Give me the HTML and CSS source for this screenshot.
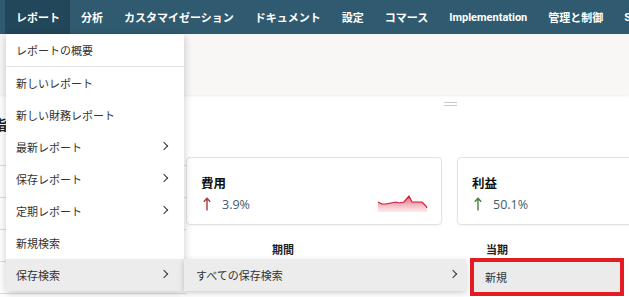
FILE: index.html
```html
<!DOCTYPE html>
<html lang="ja">
<head>
    <meta charset="UTF-8">
    <title>レポート</title>
    <link rel="stylesheet" href="styles.css">
</head>
<body>
<div class="nav">
    <a class="active">レポート</a>
    <a>分析</a>
    <a>カスタマイゼーション</a>
    <a>ドキュメント</a>
    <a>設定</a>
    <a>コマース</a>
    <a>Implementation</a>
    <a>管理と制御</a>
    <a>Setup</a>
</div>

<div class="page">
    <div class="band"></div>
    <div class="handle-row"><span class="handle"></span></div>
    <div class="dash">
        <div class="left">
            <div class="left-title">指標</div>
            <div class="left-row"></div>
            <div class="left-row"></div>
            <div class="left-row"></div>
            <div class="left-row"></div>
            <div class="left-row"></div>
        </div>
        <div class="right">
            <div class="cards">
                <div class="card">
                    <div class="info">
                        <div class="card-title">費用</div>
                        <div class="card-value">
                            <svg class="arrow" width="8" height="14" viewBox="0 0 8 14"><path d="M4 13.5V1.5M0.8 4.8L4 1.2L7.2 4.8" fill="none" stroke="#a8393c" stroke-width="1.4"/></svg>3.9%
                        </div>
                    </div>
                    <svg class="spark" width="50" height="18" viewBox="0 0 50 18">
                        <defs>
                            <linearGradient id="sg" x1="0" y1="0" x2="0" y2="1">
                                <stop offset="0" stop-color="#e0364f" stop-opacity="0.85"/>
                                <stop offset="1" stop-color="#f7c9d0" stop-opacity="0.4"/>
                            </linearGradient>
                        </defs>
                        <path d="M0 8 L4 10 L8 10 L13 9 L18 8 L21 9 L26 8 L31 2 L34 8 L39 8 L44 8 L48 12 L49 14 L49 18 L0 18 Z" fill="url(#sg)"/>
                        <path d="M0 8 L4 10 L8 10 L13 9 L18 8 L21 9 L26 8 L31 2 L34 8 L39 8 L44 8 L48 12 L49 14" fill="none" stroke="#d01a35" stroke-width="1.2"/>
                    </svg>
                </div>
                <div class="card">
                    <div class="info">
                        <div class="card-title">利益</div>
                        <div class="card-value">
                            <svg class="arrow" width="8" height="14" viewBox="0 0 8 14"><path d="M4 13.5V1.5M0.8 4.8L4 1.2L7.2 4.8" fill="none" stroke="#4b7d3e" stroke-width="1.4"/></svg>50.1%
                        </div>
                    </div>
                </div>
            </div>
            <div class="thead">
                <div>期間</div>
                <div>当期</div>
            </div>
        </div>
    </div>
</div>

<div class="menu">
    <div class="menu-item first">レポートの概要</div>
    <div class="menu-item">新しいレポート</div>
    <div class="menu-item">新しい財務レポート</div>
    <div class="menu-item sub">最新レポート</div>
    <div class="menu-item sub">保存レポート</div>
    <div class="menu-item sub">定期レポート</div>
    <div class="menu-item">新規検索</div>
    <div class="menu-item sub hover">保存検索
        <div class="submenu">
            <div class="menu-item sub hover">すべての保存検索
                <div class="submenu third">
                    <div class="menu-item">新規</div>
                </div>
            </div>
        </div>
    </div>
</div>
</body>
</html>
```

FILE: styles.css
```css
body {
    margin: 0;
    font-family: "Open Sans", "Noto Sans CJK JP", sans-serif;
    color: #222;
    background: #fff;
    overflow: hidden;
    position: relative;
    height: 297px;
}

.nav {
    display: flex;
    height: 34px;
    padding-left: 5px;
    background-color: #2f5a6f;
    white-space: nowrap;
}

.nav > a {
    display: flex;
    align-items: center;
    padding: 0 10px 0 11px;
    font-family: Roboto, "Noto Sans CJK JP", sans-serif;
    font-size: 11px;
    font-weight: bold;
    color: #fff;
}

.nav > a.active {
    background-color: #22465a;
}

.band {
    height: 61px;
    background-color: #f8f7f6;
    box-shadow: 0 1px 2px rgba(0, 0, 0, 0.08);
}

.handle-row {
    height: 13px;
    padding: 7px 0 0 444px;
}

.handle {
    display: block;
    width: 13px;
    height: 2px;
    border-top: 1px solid #c8c8c8;
    border-bottom: 1px solid #c8c8c8;
    box-sizing: content-box;
}

.dash {
    display: flex;
}

.left {
    flex: none;
    width: 186px;
}

.left-title {
    height: 19px;
    margin-left: -7px;
    font-size: 14px;
    font-weight: bold;
    line-height: 19px;
    font-family: "Noto Sans CJK JP", sans-serif;
}

.left-row {
    height: 31px;
    border-bottom: 1px solid #ddd;
}

.right {
    flex: 1;
    min-width: 0;
}

.cards {
    display: flex;
    gap: 15px;
    margin-top: 42px;
}

.card {
    flex: none;
    width: 256px;
    display: flex;
    justify-content: space-between;
    align-items: flex-end;
    padding: 16px 13px 10px 14px;
    box-sizing: border-box;
    height: 68px;
    border: 1px solid #e2e2e2;
    border-radius: 4px;
    box-shadow: 0 1px 2px rgba(0, 0, 0, 0.05);
}

.card-title {
    height: 20px;
    line-height: 20px;
    font-size: 12.5px;
    font-weight: bold;
    color: #111;
}

.card-value {
    display: flex;
    align-items: center;
    height: 20px;
    font-size: 12.5px;
    color: #3f5b6d;
}

.arrow {
    margin: 0 11px 0 2px;
}

.spark {
    margin-bottom: 2px;
}

.thead {
    display: grid;
    grid-template-columns: 194px 234px;
    margin-top: 16px;
    margin-left: -186px;
    padding-left: 186px;
    height: 18px;
    line-height: 18px;
    font-size: 11px;
    font-weight: bold;
    text-align: center;
}

.menu {
    position: absolute;
    left: 6px;
    top: 34px;
    width: 178px;
    background: #fff;
    border-radius: 0 0 4px 4px;
    box-shadow: 0 2px 8px rgba(0, 0, 0, 0.22);
    font-family: "Noto Sans CJK JP", sans-serif;
}

.menu-item {
    position: relative;
    height: 32px;
    line-height: 32px;
    padding-left: 10px;
    font-size: 11px;
    color: #333;
    white-space: nowrap;
}

.menu-item.first {
    border-bottom: 1px solid #e3e3e3;
}

.menu-item.sub::after {
    content: "";
    position: absolute;
    right: 17px;
    top: 12px;
    width: 5px;
    height: 5px;
    border-right: 1.5px solid #333;
    border-top: 1.5px solid #333;
    transform: rotate(45deg);
}

.menu-item.hover {
    background-color: #ececec;
}

.submenu {
    position: absolute;
    left: 178px;
    top: 0;
    width: 282px;
    background: #ededed;
    box-shadow: 0 2px 6px rgba(0, 0, 0, 0.2);
}

.submenu .menu-item {
    padding-left: 12px;
}

.submenu .menu-item.sub::after {
    right: 10px;
}

.submenu.third {
    left: 286px;
    top: -1px;
    width: 154px;
    height: 38px;
    box-sizing: border-box;
    border: 4px solid #e31b23;
    background: #ebebeb;
    box-shadow: none;
}

.submenu.third .menu-item {
    height: 30px;
    line-height: 30px;
    padding-left: 11px;
}
```
